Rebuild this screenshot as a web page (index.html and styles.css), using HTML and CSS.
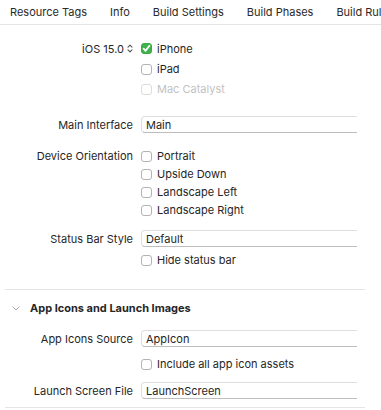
FILE: index.html
```html
<!DOCTYPE html>
<html>
<head>
<meta charset="utf-8">
<link rel="stylesheet" href="styles.css">
</head>
<body>
<div class="tabs">
  <span>Resource Tags</span>
  <span>Info</span>
  <span>Build Settings</span>
  <span>Build Phases</span>
  <span>Build Rules</span>
</div>

<div class="form form-top">
  <div class="row r-first">
    <div class="label">iOS 15.0 <svg class="stepper" width="6" height="9" viewBox="0 0 6 9"><path d="M1 3.2 L3 1.2 L5 3.2 M1 5.8 L3 7.8 L5 5.8" fill="none" stroke="#555" stroke-width="1.1" stroke-linecap="round" stroke-linejoin="round"/></svg></div>
    <div class="ctrl"><span class="cb on"><svg width="11" height="11" viewBox="0 0 11 11"><path d="M2.6 5.6 L4.6 7.8 L8.4 2.8" fill="none" stroke="#fff" stroke-width="1.8" stroke-linecap="round" stroke-linejoin="round"/></svg></span>iPhone</div>
  </div>
  <div class="row r-plat">
    <div class="label"></div>
    <div class="ctrl"><span class="cb"></span>iPad</div>
  </div>
  <div class="row r-plat">
    <div class="label"></div>
    <div class="ctrl disabled"><span class="cb"></span>Mac Catalyst</div>
  </div>

  <div class="row r-field gap-main">
    <div class="label">Main Interface</div>
    <div class="field">Main</div>
  </div>

  <div class="row r-check gap-orient">
    <div class="label">Device Orientation</div>
    <div class="ctrl"><span class="cb"></span>Portrait</div>
  </div>
  <div class="row r-check">
    <div class="label"></div>
    <div class="ctrl"><span class="cb"></span>Upside Down</div>
  </div>
  <div class="row r-check">
    <div class="label"></div>
    <div class="ctrl"><span class="cb"></span>Landscape Left</div>
  </div>
  <div class="row r-check">
    <div class="label"></div>
    <div class="ctrl"><span class="cb"></span>Landscape Right</div>
  </div>

  <div class="row r-field gap-status">
    <div class="label">Status Bar Style</div>
    <div class="field">Default</div>
  </div>
  <div class="row r-check gap-hide">
    <div class="label"></div>
    <div class="ctrl"><span class="cb"></span>Hide status bar</div>
  </div>
</div>

<div class="sep sep-1"></div>

<div class="section-head">
  <svg class="chev" width="8" height="5" viewBox="0 0 8 5"><path d="M0.8 0.8 L4 4 L7.2 0.8" fill="none" stroke="#a8a8a8" stroke-width="1" stroke-linecap="round" stroke-linejoin="round"/></svg>
  <span>App Icons and Launch Images</span>
</div>

<div class="form">
  <div class="row r-field gap-icons">
    <div class="label">App Icons Source</div>
    <div class="field">AppIcon</div>
  </div>
  <div class="row r-check gap-include">
    <div class="label"></div>
    <div class="ctrl"><span class="cb"></span>Include all app icon assets</div>
  </div>
  <div class="row r-field gap-launch">
    <div class="label">Launch Screen File</div>
    <div class="field">LaunchScreen</div>
  </div>
</div>

<div class="sep sep-2"></div>
</body>
</html>
```
FILE: styles.css
```css
html, body {
  margin: 0;
  padding: 0;
  background: #ffffff;
}
body {
  font-family: Inter, "Liberation Sans", sans-serif;
  font-size: 11px;
  color: #262626;
  width: 381px;
  overflow: hidden;
}
.tabs {
  display: flex;
  gap: 23px;
  height: 24px;
  align-items: center;
  padding-left: 10px;
  border-bottom: 1px solid #e4e4e4;
  white-space: nowrap;
  overflow: hidden;
  color: #2a2a2a;
}
.form {
  display: flex;
  flex-direction: column;
  width: 357px;
}
.form-top {
  padding-top: 13px;
}
.row {
  display: grid;
  grid-template-columns: 133px 1fr;
  column-gap: 8px;
  align-items: center;
}
.label {
  text-align: right;
  white-space: nowrap;
  display: flex;
  justify-content: flex-end;
  align-items: center;
  gap: 3px;
}
.stepper {
  display: block;
}
.r-first { height: 21px; }
.r-plat { height: 20px; }
.r-check { height: 18px; }
.r-field { height: 17px; }
.gap-main { margin-top: 17px; }
.gap-orient { margin-top: 14px; }
.gap-status { margin-top: 11px; }
.gap-hide { margin-top: 4px; }
.gap-icons { margin-top: 13px; }
.gap-include { margin-top: 8px; }
.gap-launch { margin-top: 9px; }

.ctrl {
  display: flex;
  align-items: center;
  white-space: nowrap;
}
.ctrl.disabled {
  color: #c2c2c2;
}
.cb {
  box-sizing: border-box;
  width: 11px;
  height: 11px;
  border: 1px solid #b3b3b3;
  border-radius: 3px;
  background: #fff;
  margin-right: 5px;
  flex: none;
  display: flex;
}
.ctrl.disabled .cb {
  border-color: #dcdcdc;
}
.cb.on {
  background: #3fb24a;
  border-color: #3aa845;
}
.cb.on svg {
  margin: -1px;
}
.field {
  box-sizing: border-box;
  height: 17px;
  border: 1px solid #dedede;
  border-bottom-color: #bdbdbd;
  border-right: none;
  border-radius: 4px 0 0 4px;
  padding-left: 4px;
  display: flex;
  align-items: center;
  white-space: nowrap;
}
.sep {
  height: 1px;
  background: #e4e4e4;
  margin-left: 5px;
  width: 360px;
}
.sep-1 { margin-top: 20px; }
.sep-2 { margin-top: 8px; }
.section-head {
  display: flex;
  align-items: center;
  height: 18px;
  margin-top: 9px;
  font-weight: 700;
}
.chev {
  margin-left: 12px;
  margin-right: 10px;
  display: block;
}
```
